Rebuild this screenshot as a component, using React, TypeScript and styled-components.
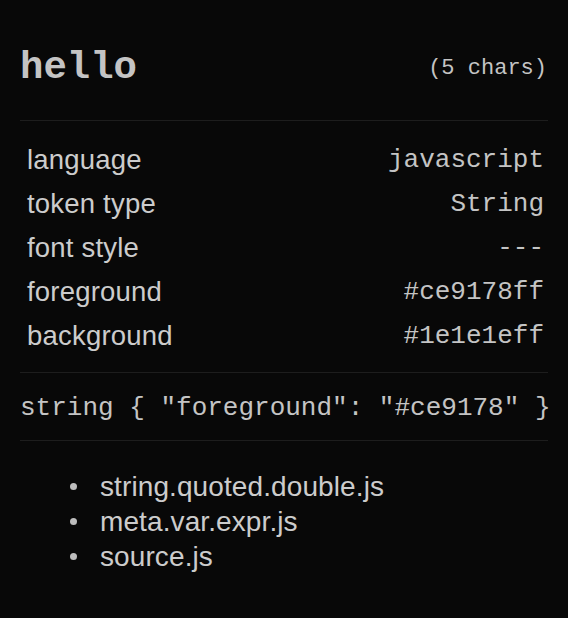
import React from 'react';
import styled, { createGlobalStyle } from 'styled-components';

const GlobalStyle = createGlobalStyle`
  html, body {
    margin: 0;
    padding: 0;
    background: #080808;
  }
`;

const rows: [string, string][] = [
  ['language', 'javascript'],
  ['token type', 'String'],
  ['font style', '---'],
  ['foreground', '#ce9178ff'],
  ['background', '#1e1e1eff'],
];

const scopes = ['string.quoted.double.js', 'meta.var.expr.js', 'source.js'];

const App: React.FC = () => {
  return (
    <>
      <GlobalStyle />
      <Widget>
        <Header>
          <Token>hello</Token>
          <Length>(5 chars)</Length>
        </Header>
        <Rule />
        <Table>
          <tbody>
            {rows.map(([label, value]) => (
              <tr key={label}>
                <Label>{label}</Label>
                <Value>{value}</Value>
              </tr>
            ))}
          </tbody>
        </Table>
        <Rule />
        <ThemeRule>string {'{'} "foreground": "#ce9178" {'}'}</ThemeRule>
        <Rule />
        <Scopes>
          {scopes.map(s => (
            <Scope key={s}>{s}</Scope>
          ))}
        </Scopes>
      </Widget>
    </>
  );
};

export default App;

const Widget = styled.div`
  box-sizing: border-box;
  width: 568px;
  height: 618px;
  padding: 48px 20px 0 20px;
  background: #080808;
  color: #cccccc;
  font-family: "Liberation Sans", Arial, sans-serif;
`;

const Header = styled.div`
  display: flex;
  align-items: center;
  justify-content: space-between;
  height: 40px;
  margin-bottom: 32px;
`;

const Token = styled.span`
  font-family: "Liberation Mono", "Courier New", monospace;
  font-weight: bold;
  font-size: 39px;
  color: #c4c4c4;
`;

const Length = styled.span`
  font-family: "Liberation Mono", "Courier New", monospace;
  font-size: 22px;
  color: #c4c4c4;
  margin-right: 1px;
`;

const Rule = styled.div`
  height: 1px;
  background: #1d1d1d;
`;

const Table = styled.table`
  width: 100%;
  border-collapse: collapse;
  margin: 17px 0 14px 0;
`;

const Label = styled.td`
  height: 44px;
  padding: 0 0 0 7px;
  font-size: 27.5px;
  letter-spacing: 0.2px;
  color: #cccccc;
`;

const Value = styled.td`
  height: 44px;
  padding: 0 4px 0 0;
  text-align: right;
  font-family: "Liberation Mono", "Courier New", monospace;
  font-size: 26px;
  color: #c4c4c4;
`;

const ThemeRule = styled.div`
  height: 36px;
  line-height: 36px;
  margin: 17px 0 14px 0;
  font-family: "Liberation Mono", "Courier New", monospace;
  font-size: 26px;
  white-space: pre;
  color: #c4c4c4;
`;

const Scopes = styled.ul`
  list-style: none;
  margin: 28px 0 0 0;
  padding: 0 0 0 80px;
`;

const Scope = styled.li`
  position: relative;
  height: 35px;
  line-height: 35px;
  font-size: 28px;
  letter-spacing: 0.1px;
  color: #cccccc;

  &::before {
    content: '';
    position: absolute;
    left: -30px;
    top: 14px;
    width: 7px;
    height: 7px;
    border-radius: 50%;
    background: #bdbdbd;
  }
`;
